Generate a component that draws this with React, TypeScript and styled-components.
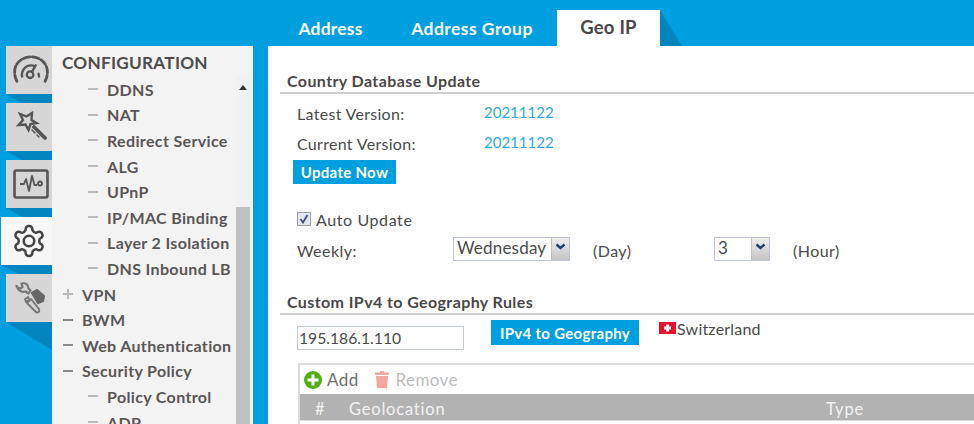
import React from "react";
import styled, { createGlobalStyle } from "styled-components";

const Global = createGlobalStyle`
  html, body { margin: 0; padding: 0; background: #009fdf; }
  #root { width: 974px; height: 424px; overflow: hidden; }
  * { box-sizing: border-box; }
`;

const Page = styled.div`
  display: flex; width: 974px; height: 424px; overflow: hidden; background: #009fdf;
  font-family: Lato, "Liberation Sans", sans-serif; color: #4a4a4a;
`;
const Left = styled.div`
  display: flex; width: 268px; flex: none; padding-top: 46px; padding-right: 15px; height: 424px;
`;
const Rail = styled.div`
  width: 52px; flex: none; display: flex; flex-direction: column; align-items: flex-end;
`;
const RailTab = styled.div<{ $active?: boolean }>`
  width: ${(p) => (p.$active ? 51 : 46)}px; height: 48px; flex: none;
  display: flex; align-items: center; justify-content: center;
  background: ${(p) => (p.$active ? "#f7f7f7" : "#d6d6d6")};
  padding-left: ${(p) => (p.$active ? 5 : 3)}px;
  svg { display: block; }
`;
const Shade = styled.div<{ $tall?: boolean; $wide?: boolean }>`
  width: ${(p) => (p.$wide ? 51 : 46)}px; height: ${(p) => (p.$tall ? 28 : 9)}px; flex: none;
  background: #0085bf;
  clip-path: ${(p) => (p.$tall ? "polygon(0 0,100% 0,100% 100%)" : "polygon(0 0,100% 0,100% 100%,35% 100%)")};
`;
const Menu = styled.div`
  width: 201px; flex: none; background: #f3f3f3; display: flex; flex-direction: column; height: 378px;
`;
const MenuTitle = styled.div`
  height: 30.500px; padding: 5px 0 0 10px; font-size: 17.200px; line-height: 23px; font-weight: 700; letter-spacing: 0.250px; color: #4d4b4c; flex: none;
`;
const MenuBody = styled.div`
  flex: 1; display: flex; min-height: 0;
`;
const List = styled.div`
  width: 184px; flex: none; overflow: hidden;
`;
const Item = styled.div<{ $sub?: boolean }>`
  height: 25.600px; display: flex; align-items: center; padding-left: ${(p) => (p.$sub ? 36 : 11)}px;
  font-size: 16px; font-weight: 700; letter-spacing: 0.350px; color: #5a5657; white-space: nowrap;
`;
const Dash = styled.span<{ $sub?: boolean }>`
  width: 10px; height: 2px; background: ${(p) => (p.$sub ? "#b9b9b9" : "#8a8a8a")}; margin-right: 9px; flex: none; position: relative;
`;
const PlusBar = styled.span`
  position: absolute; left: 4px; top: -4px; width: 2px; height: 10px; background: #b9b9b9;
`;
const Scroll = styled.div`
  width: 14px; flex: none; background: #f1f1f1; display: flex; flex-direction: column; align-items: center;
`;
const Arrow = styled.div`
  width: 0; height: 0; margin-top: 8px; border-left: 4px solid transparent; border-right: 4px solid transparent; border-bottom: 5px solid #333;
`;
const Thumb = styled.div`
  width: 14px; height: 217px; background: #c0c0c0; margin-top: auto; flex: none;
`;
const Main = styled.div`
  flex: 1; display: flex; flex-direction: column; min-width: 0;
`;
const Tabs = styled.div`
  height: 46px; flex: none; display: flex; align-items: stretch; padding-top: 10px;
`;
const Tab = styled.div<{ $active?: boolean; $w: number; $inset?: number }>`
  width: ${(p) => p.$w}px; display: flex; align-items: center; justify-content: center;
  font-size: ${(p) => (p.$active ? 18.500 : 17.500)}px; font-weight: 700; letter-spacing: 0.200px;
  padding-top: ${(p) => (p.$active ? 0 : 1)}px;
  padding-bottom: ${(p) => (p.$active ? 3 : 0)}px;
  padding-right: ${(p) => p.$inset ?? 0}px;
  color: ${(p) => (p.$active ? "#4a4748" : "#fff")};
  background: ${(p) => (p.$active ? "#fff" : "transparent")};
`;
const TabLabel = styled.span<{ $wide?: boolean }>`
  letter-spacing: ${(p) => (p.$wide ? 0.450 : 0.200)}px;
`;
const TabWedge = styled.div`
  width: 22px; background: #0085bf; clip-path: polygon(0 0, 100% 100%, 0 100%);
`;
const Content = styled.div`
  flex: 1; background: #fff; padding: 27px 0 0 12px; display: flex; flex-direction: column;
`;
const SectionTitle = styled.div<{ $gap?: number }>`
  height: 21px; padding-left: 7px; border-bottom: 2px solid #cfcfcf; font-size: 16px; line-height: 15px; font-weight: 700; letter-spacing: 0.400px; color: #4a4748; flex: none;
  margin-top: ${(p) => p.$gap ?? 0}px;
`;
const InfoList = styled.div`
  padding-top: 4px; flex: none;
`;
const InfoRow = styled.div`
  display: grid; grid-template-columns: 187px auto; padding-left: 17px; height: 30px; align-items: center; font-size: 16px; letter-spacing: 0.300px;
`;
const Version = styled.span`
  color: #2ea8e2; font-size: 15px; letter-spacing: 0; position: relative; top: -1px;
`;
const PrimaryButton = styled.div<{ $w: number }>`
  width: ${(p) => p.$w}px; background: #009fdf; color: #fff; font-weight: 700; font-size: 15px; letter-spacing: 0.300px;
  display: flex; align-items: center; justify-content: center; flex: none;
`;
const UpdateWrap = styled.div`
  padding-left: 13px; height: 24px; display: flex; flex: none; margin-top: 2px;
`;
const CheckRow = styled.label`
  display: flex; align-items: center; gap: 5px; padding-left: 17px; height: 16px; margin-top: 27px; font-size: 16px; letter-spacing: 0.600px; flex: none;
`;
const CheckBox = styled.span`
  width: 14px; height: 14px; border: 1px solid #9c9c9c; background: #e4e8f5; display: flex; align-items: center; justify-content: center; flex: none;
`;
const WeekRow = styled.div`
  display: flex; align-items: center; height: 24px; margin-top: 10px; padding-left: 17px; font-size: 16px; letter-spacing: 0.450px; flex: none;
`;
const WeekLabel = styled.span`
  width: 156px; flex: none; padding-top: 2px;
`;
const Select = styled.div<{ $w: number }>`
  width: ${(p) => p.$w}px; height: 24px; border: 1px solid #bcc3d6; display: flex; flex: none; background: #fff; overflow: hidden;
`;
const SelectValue = styled.span`
  flex: 1; min-width: 0; padding-left: 3px; font-size: 17px; letter-spacing: 0.200px; line-height: 20px; overflow: hidden; white-space: nowrap;
`;
const SelectButton = styled.span`
  width: 18px; flex: none; background: linear-gradient(#eeeeee, #c4c4c4); border-left: 1px solid #c0c0c0; display: flex; align-items: flex-start; justify-content: center; padding-top: 5px;
`;
const Unit = styled.span<{ $w: number }>`
  width: ${(p) => p.$w}px; flex: none; padding-left: 23px; padding-top: 2px;
`;
const RuleRow = styled.div`
  display: flex; align-items: flex-start; height: 48px; padding: 5px 0 0 17px; flex: none;
`;
const TextInput = styled.div`
  width: 167px; height: 24px; margin-top: 6px; border: 1px solid #c4c9d8; padding-left: 1px; font-size: 15.700px; line-height: 23px; flex: none;
`;
const RuleButton = styled(PrimaryButton)`
  height: 25px; margin-left: 27px;
`;
const Flag = styled.svg`
  margin: 2px 0 0 20px; flex: none;
`;
const Country = styled.span`
  font-size: 16px; letter-spacing: 0.200px; line-height: 18px; flex: none; margin-left: 1px;
`;
const Grid = styled.div`
  margin-left: 18px; border-top: 2px solid #dcdcdc; border-left: 2px solid #dcdcdc; flex: 1; display: flex; flex-direction: column;
`;
const Toolbar = styled.div`
  height: 29px; display: flex; align-items: center; padding-left: 4px; flex: none; font-size: 17px; letter-spacing: 0.400px;
`;
const ToolText = styled.span<{ $off?: boolean }>`
  color: ${(p) => (p.$off ? "#bdbdbd" : "#6f6f6f")}; margin-left: ${(p) => (p.$off ? 7 : 5)}px; margin-right: ${(p) => (p.$off ? 0 : 16)}px;
`;
const HeaderRow = styled.div`
  height: 27px; padding-top: 3px; background: #b2b2b2; color: #f2f2f2; display: grid; grid-template-columns: 49px 477px auto; align-items: center; font-size: 16.500px; letter-spacing: 0.800px; flex: none; border-bottom: 1px solid #dcdcdc;
`;
const HeaderCell = styled.span<{ $center?: boolean }>`
  padding-left: ${(p) => (p.$center ? 15 : 0)}px;
`;

const Gauge = () => (
  <svg width="36" height="30" viewBox="0 0 38 32" fill="none" stroke="#555" strokeWidth="3" strokeLinecap="round">
    <path d="M4 28C2 24 1.500 21 1.500 18 1.500 9 9 2 19 2s17.500 7 17.500 16c0 3-.5 6-2.500 10" strokeDasharray="7 2.500" />
    <path d="M9.500 23c-1-6 3-12 9.500-12 2 0 3 .5 4 1" strokeWidth="2.500" />
    <circle cx="18" cy="21" r="3.500" strokeWidth="2.500" />
    <path d="M20 18l4-7M27 20c.5 1 .5 2 .5 3" strokeWidth="2.500" />
  </svg>
);
const Wand = () => (
  <svg width="32" height="32" viewBox="0 0 32 32" fill="none" stroke="#555" strokeWidth="2.400" strokeLinejoin="miter" strokeLinecap="round">
    <path d="M17 2l-.5 7 5 3-6 1-2 6-3-5.500-7 .5 4.500-5L5 3l6.500 2.500z" />
    <path d="M19 16l11 11" strokeWidth="3.800" />
    <path d="M17 19l3 3M22 24l2 2" strokeWidth="1.500" />
  </svg>
);
const Monitor = () => (
  <svg width="36" height="30" viewBox="0 0 36 30" fill="none" stroke="#555" strokeWidth="2.600" strokeLinejoin="round">
    <rect x="1.500" y="1.500" width="33" height="27" rx="2" />
    <path d="M7 15h4l2-5 3 12 3-15 2.500 9H24" strokeWidth="1.800" />
    <circle cx="27" cy="14.500" r="2" strokeWidth="1.800" />
  </svg>
);
const Gear = () => (
  <svg width="36" height="36" viewBox="0 0 24 24" fill="none" stroke="#444" strokeWidth="1.700" strokeLinejoin="round">
    <path d="M12.220 2h-.44a2 2 0 0 0-2 2v.18a2 2 0 0 1-1 1.730l-.43.250a2 2 0 0 1-2 0l-.15-.08a2 2 0 0 0-2.730.730l-.22.380a2 2 0 0 0 .730 2.730l.15.100a2 2 0 0 1 1 1.720v.510a2 2 0 0 1-1 1.740l-.15.090a2 2 0 0 0-.730 2.730l.22.380a2 2 0 0 0 2.730.730l.15-.08a2 2 0 0 1 2 0l.43.250a2 2 0 0 1 1 1.730V20a2 2 0 0 0 2 2h.44a2 2 0 0 0 2-2v-.18a2 2 0 0 1 1-1.730l.43-.250a2 2 0 0 1 2 0l.15.080a2 2 0 0 0 2.730-.730l.22-.390a2 2 0 0 0-.730-2.730l-.15-.080a2 2 0 0 1-1-1.740v-.500a2 2 0 0 1 1-1.740l.15-.090a2 2 0 0 0 .730-2.730l-.22-.380a2 2 0 0 0-2.730-.730l-.15.080a2 2 0 0 1-2 0l-.43-.250a2 2 0 0 1-1-1.730V4a2 2 0 0 0-2-2z" />
    <circle cx="12" cy="12" r="3.500" />
  </svg>
);
const Tools = () => (
  <svg width="32" height="32" viewBox="0 0 32 32" fill="none" stroke="#777" strokeWidth="2.200" strokeLinecap="round" strokeLinejoin="round">
    <path d="M1.500 4l3 3 3-2-1-3.500c4-1 7 1 7 5l2 2-2 3-3-2c-3 1-7 0-9-5.500z" />
    <path d="M17 11l5-3 7 6-1 5-5 2z" fill="#666" stroke="#666" />
    <path d="M13 15l-3 2 1 3 3-2zM12 21l9 9c2 1 4 0 3-3l-8-10z" strokeWidth="2" />
  </svg>
);
const Chevron = () => (
  <svg width="11" height="7" viewBox="0 0 11 7" fill="none" stroke="#1f3f7a" strokeWidth="2.400"><path d="M1.500 1.500l4 3.500 4-3.500" /></svg>
);

const items: { label: string; sub?: boolean; plus?: boolean }[] = [
  { label: "DDNS", sub: true },
  { label: "NAT", sub: true },
  { label: "Redirect Service", sub: true },
  { label: "ALG", sub: true },
  { label: "UPnP", sub: true },
  { label: "IP/MAC Binding", sub: true },
  { label: "Layer 2 Isolation", sub: true },
  { label: "DNS Inbound LB", sub: true },
  { label: "VPN", plus: true },
  { label: "BWM" },
  { label: "Web Authentication" },
  { label: "Security Policy" },
  { label: "Policy Control", sub: true },
  { label: "ADP", sub: true },
];

export default function App() {
  return (
    <Page>
      <Global />
      <Left>
        <Rail>
          <RailTab><Gauge /></RailTab>
          <Shade />
          <RailTab><Wand /></RailTab>
          <Shade />
          <RailTab><Monitor /></RailTab>
          <Shade />
          <RailTab $active><Gear /></RailTab>
          <Shade $wide />
          <RailTab><Tools /></RailTab>
          <Shade $tall />
        </Rail>
        <Menu>
          <MenuTitle>CONFIGURATION</MenuTitle>
          <MenuBody>
            <List>
              {items.map((it) => (
                <Item key={it.label} $sub={it.sub}>
                  <Dash $sub={it.sub || it.plus}>{it.plus && <PlusBar />}</Dash>
                  {it.label}
                </Item>
              ))}
            </List>
            <Scroll>
              <Arrow />
              <Thumb />
            </Scroll>
          </MenuBody>
        </Menu>
      </Left>
      <Main>
        <Tabs>
          <Tab $w={125}>Address</Tab>
          <Tab $w={164} $inset={6}><TabLabel $wide>Address Group</TabLabel></Tab>
          <Tab $w={103} $active>Geo IP</Tab>
          <TabWedge />
        </Tabs>
        <Content>
          <SectionTitle>Country Database Update</SectionTitle>
          <InfoList>
            <InfoRow>Latest Version:<Version>20211122</Version></InfoRow>
            <InfoRow>Current Version:<Version>20211122</Version></InfoRow>
          </InfoList>
          <UpdateWrap><PrimaryButton $w={103}>Update Now</PrimaryButton></UpdateWrap>
          <CheckRow>
            <CheckBox>
              <svg width="10" height="10" viewBox="0 0 10 10" fill="none" stroke="#3a4a8a" strokeWidth="1.800"><path d="M1.500 5l2.500 3.500L8.500 1" /></svg>
            </CheckBox>
            Auto Update
          </CheckRow>
          <WeekRow>
            <WeekLabel>Weekly:</WeekLabel>
            <Select $w={117}>
              <SelectValue>Wednesday</SelectValue>
              <SelectButton><Chevron /></SelectButton>
            </Select>
            <Unit $w={144}>(Day)</Unit>
            <Select $w={56}>
              <SelectValue>3</SelectValue>
              <SelectButton><Chevron /></SelectButton>
            </Select>
            <Unit $w={100}>(Hour)</Unit>
          </WeekRow>
          <SectionTitle $gap={33}>Custom IPv4 to Geography Rules</SectionTitle>
          <RuleRow>
            <TextInput>195.186.1.110</TextInput>
            <RuleButton $w={148}>IPv4 to Geography</RuleButton>
            <Flag width="17" height="12" viewBox="0 0 17 12">
              <rect width="17" height="12" fill="#e8112d" />
              <path d="M7 2.500h3V4.500h2v3h-2v2H7v-2H5v-3h2z" fill="#fff" />
            </Flag>
            <Country>Switzerland</Country>
          </RuleRow>
          <Grid>
            <Toolbar>
              <svg width="18" height="18" viewBox="0 0 18 18">
                <circle cx="9" cy="9" r="9" fill="#4cae12" />
                <path d="M7.500 3.500h3v4h4v3h-4v4h-3v-4h-4v-3h4z" fill="#fff" />
              </svg>
              <ToolText>Add</ToolText>
              <svg width="14" height="17" viewBox="0 0 14 17">
                <path d="M5 0h4v1.500h5V4H0V1.500h5zM1 5h12l-1 12H2z" fill="#f3a7a0" />
              </svg>
              <ToolText $off>Remove</ToolText>
            </Toolbar>
            <HeaderRow>
              <HeaderCell $center>#</HeaderCell>
              <HeaderCell>Geolocation</HeaderCell>
              <HeaderCell>Type</HeaderCell>
            </HeaderRow>
          </Grid>
        </Content>
      </Main>
    </Page>
  );
}
